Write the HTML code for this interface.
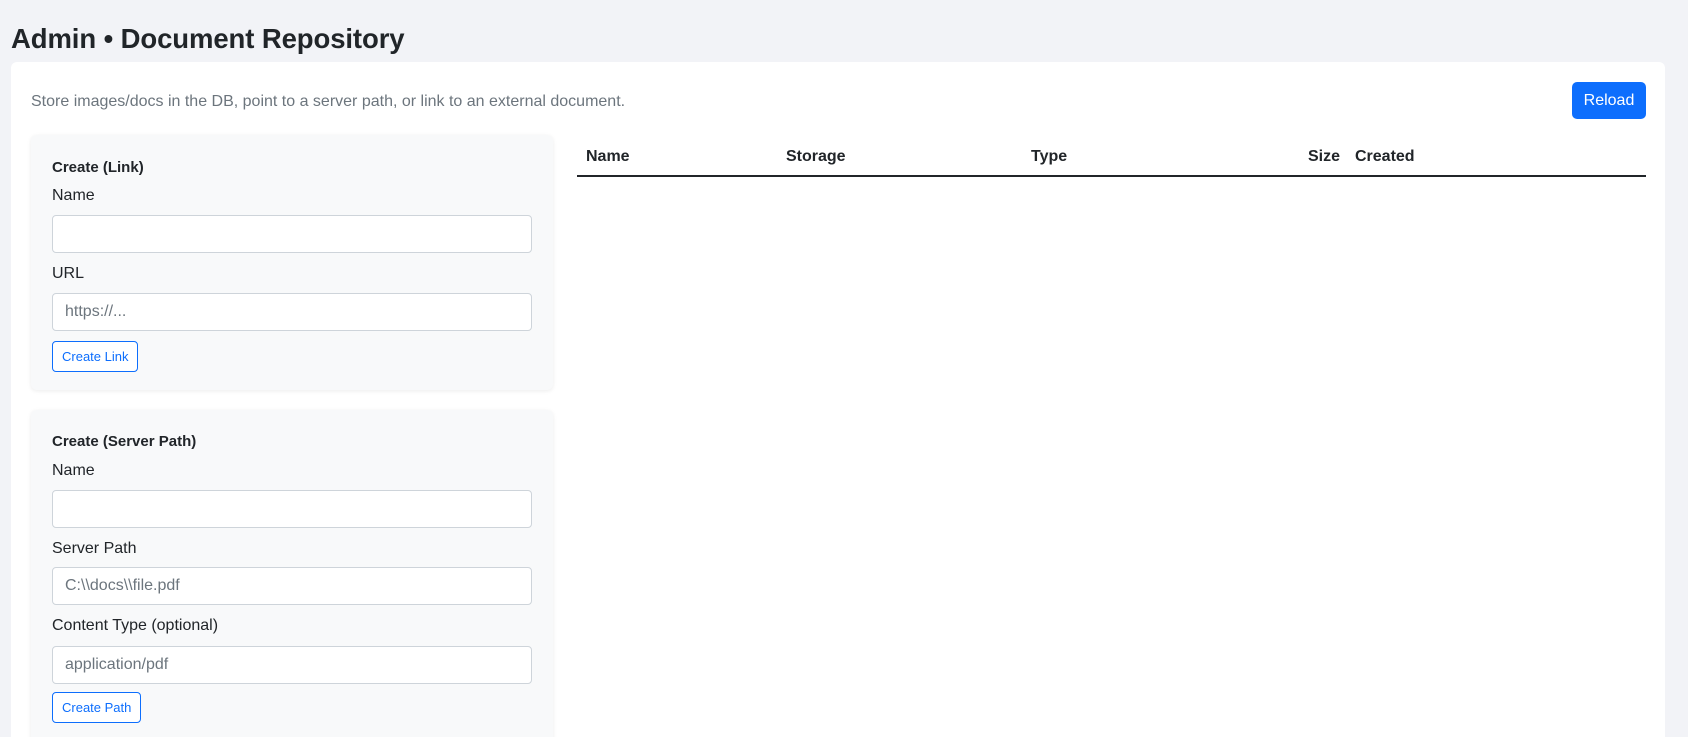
<!DOCTYPE html>
<html style="height:737px;overflow:hidden"><head><meta charset="utf-8"><style>
*{box-sizing:border-box;margin:0;padding:0}
body{width:1688px;height:737px;overflow:hidden;background:#f2f3f7;font-family:"Liberation Sans",sans-serif;color:#212529;position:relative}
.abs{position:absolute}
h1{position:absolute;left:11px;top:23px;font-size:27.5px;font-weight:600;letter-spacing:-0.1px}
.card{position:absolute;left:11px;top:62px;width:1654px;height:675px;background:#fff;border-radius:6px 6px 0 0}
.desc{position:absolute;left:31px;top:93px;font-size:16px;color:#6c757d}
.reload{position:absolute;left:1572px;top:82px;width:74px;height:37px;background:#0d6efd;color:#fff;border-radius:5px;font-size:16px;text-align:center;line-height:37px}
.sub{position:absolute;left:31px;width:522px;background:#f8f9fa;border-radius:6px;box-shadow:0 1px 4px rgba(0,0,0,.08)}
.t{position:absolute;left:52px;font-size:15px;font-weight:bold}
.l{position:absolute;left:52px;font-size:16px}
.in{position:absolute;left:52px;width:480px;height:38px;background:#fff;border:1px solid #ced4da;border-radius:4px;font-size:16px;color:#6c757d;padding-left:12px;line-height:36px}
.btn{position:absolute;left:52px;height:31px;border:1px solid #0d6efd;border-radius:4px;color:#0d6efd;font-size:13px;line-height:29px;padding:0 9px;background:#fff}
.th{position:absolute;top:148px;font-size:16px;font-weight:bold}
</style></head><body>
<h1>Admin • Document Repository</h1>
<div class="card"></div>
<div class="desc">Store images/docs in the DB, point to a server path, or link to an external document.</div>
<div class="reload">Reload</div>
<div class="sub" style="top:135px;height:255px"></div>
<div class="t" style="top:159px">Create (Link)</div>
<div class="l" style="top:187px">Name</div>
<div class="in" style="top:215px"></div>
<div class="l" style="top:265px">URL</div>
<div class="in" style="top:293px">https://...</div>
<div class="btn" style="top:341px">Create Link</div>
<div class="sub" style="top:410px;height:340px"></div>
<div class="t" style="top:433px">Create (Server Path)</div>
<div class="l" style="top:462px">Name</div>
<div class="in" style="top:490px"></div>
<div class="l" style="top:540px">Server Path</div>
<div class="in" style="top:567px">C:\\docs\\file.pdf</div>
<div class="l" style="top:617px">Content Type (optional)</div>
<div class="in" style="top:646px">application/pdf</div>
<div class="btn" style="top:692px">Create Path</div>
<div class="th" style="left:586px">Name</div>
<div class="th" style="left:786px">Storage</div>
<div class="th" style="left:1031px">Type</div>
<div class="th" style="left:1308px">Size</div>
<div class="th" style="left:1355px">Created</div>
<div class="abs" style="left:577px;top:175px;width:1069px;height:2px;background:#212529"></div>
</body></html>
